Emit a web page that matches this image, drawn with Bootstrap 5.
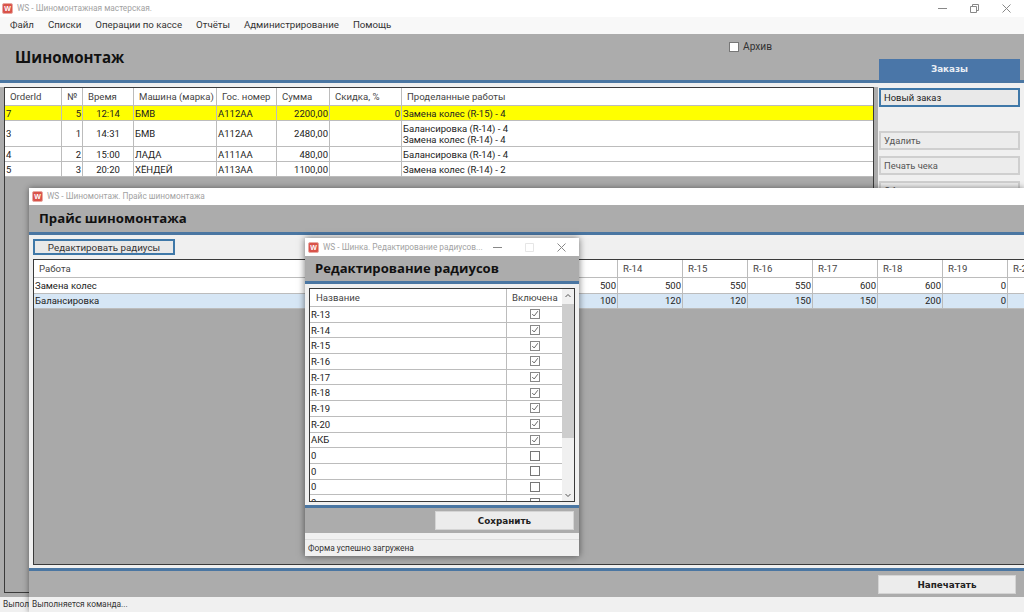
<!DOCTYPE html>
<html lang="ru">
<head>
    <meta charset="UTF-8">
    <meta name="viewport" content="width=device-width, initial-scale=1.0">
    <title>Шиномонтаж</title>
    <link href="https://cdn.jsdelivr.net/npm/bootstrap@5.3.0/dist/css/bootstrap.min.css" rel="stylesheet" />
    <style>
        html, body { height: 612px; overflow: hidden; }
        body { font-family: Roboto, sans-serif; font-size: 9.5px; color: #222; background: #aaa; position: relative; }

        .win { background: #f0f0f0; display: flex; flex-direction: column; }
        .win-main { height: 612px; }
        .win-price { position: absolute; left: 29px; top: 188px; right: 0; height: 424px; box-shadow: 0 0 6px rgba(0,0,0,.45); }
        .win-dialog { position: absolute; left: 305px; top: 238px; width: 274px; height: 318px; box-shadow: 0 0 7px rgba(0,0,0,.55); }

        .titlebar { height: 17px; background: #fff; color: #a2a2a2; font-size: 8.3px; flex: none; }
        .win-dialog .titlebar { height: 18px; }
        .app-icon { width: 11px; height: 11px; margin: 0 4px 0 2px; background: #d9534a; border: 1px solid #e9a9a2; border-radius: 2px; color: #fff; font: bold 7px/9px "Liberation Sans", sans-serif; text-align: center; flex: none; }
        .win-price .app-icon, .win-dialog .app-icon { margin-left: 3px; }
        .ctl { color: #888; margin-right: 23px; flex: none; }
        .ctl:last-child { margin-right: 13px; }
        .ctl-off { opacity: .2; }

        .menubar { height: 17px; background: #f8f8f8; font-size: 9.7px; color: #333; padding-left: 10px; gap: 14px; flex: none; }

        .head { background: #acacac; border-bottom: 3px solid #4a76a2; flex: none; }
        .head h1 { font-family: "Open Sans", sans-serif; font-weight: 700; color: #111; margin: 0; }
        .head-main { height: 49px; }
        .head-main h1 { width: 729px; padding: 14px 0 0 15px; font-size: 15.1px; }
        .archive { width: 150px; padding-top: 5px; font-size: 10.2px; color: #333; gap: 4px; height: 20px; }
        .tab { width: 141px; height: 22px; background: #4a76a8; color: #e8eef5; font-family: "DejaVu Sans", sans-serif; font-weight: 700; font-size: 8.8px; margin-top: 25px; }
        .head-price { height: 30px; padding: 6px 0 0 10px; }
        .head-price h1 { font-size: 13.2px; }
        .head-dialog { height: 28px; padding: 5px 0 0 10px; }
        .head-dialog h1 { font-size: 13.1px; }

        .form-check-input { width: 10px; height: 10px; margin: 0; border: 1px solid #777; border-radius: 0 !important; background-color: #fff; flex: none; }
        .form-check-input:checked[type=checkbox] { background-color: #fff; border-color: #888; --bs-form-check-bg-image: url("data:image/svg+xml,%3csvg xmlns='http://www.w3.org/2000/svg' viewBox='0 0 10 10'%3e%3cpath fill='none' stroke='%23666' stroke-width='1.2' d='M1.500 5l2.500 2.500 4.500-6'/%3e%3c/svg%3e"); }

        .main-body { height: 514px; min-height: 0; flex: none; }
        .main-left { width: 878px; background: #acacac; padding: 0 4px 5px 4px; }
        .band { height: 4px; background: #f0f0f0; margin: 0 -4px; }
        .frame { border: 1px solid #3a3a3a; background: #a9a9a9; overflow: hidden; }
        .main-left .frame { height: 506px; }
        .main-right { width: 146px; padding: 5px 4px 0 1px; }

        .side-btn { display: block; width: 141px; height: 19px; padding: 0 0 0 3px; background: #ececec; border: 2px solid #cfcfcf; border-radius: 0; color: #555; font-size: 9.4px; text-align: left; line-height: 14px; --bs-btn-hover-bg: #ececec; }
        .side-btn.active-btn { border-color: #3f78a8; background: #e9e9e9; color: #222; margin-bottom: 24px; }
        .side-btn + .side-btn { margin-top: 6px; }
        .side-btn.active-btn + .side-btn { margin-top: 0; }

        .grid { table-layout: fixed; margin: 0; border-collapse: separate; border-spacing: 0; font-size: 9.5px; }
        .grid th, .grid td { padding: 0 1px 0 1px; border: 0; border-right: 1px solid #bcbcbc; border-bottom: 1px solid #bcbcbc; background: #fff; color: #222; font-weight: 400; white-space: nowrap; overflow: hidden; line-height: 11px; vertical-align: middle; }
        .grid th { font-size: 9.6px; color: #444; padding-left: 5px; }
        .grid .num { text-align: right; }
        .grid tr.row-yellow td { background: #ffff00; }
        .grid tr.row-blue td { background: #d6e6f5; }

        .orders { width: 870px; }
        .orders th { height: 18px; }
        .orders td { height: 15px; }
        .orders tr.tall td { height: 26px; }
        .orders th:nth-child(1) { width: 57px; }
        .orders th:nth-child(2) { width: 21px; }
        .orders th:nth-child(3) { width: 51px; }
        .orders th:nth-child(4) { width: 83px; }
        .orders th:nth-child(5) { width: 60px; }
        .orders th:nth-child(6) { width: 53px; }
        .orders th:nth-child(7) { width: 72px; }
        .orders .time { text-align: center; }

        .price-body { height: 336px; padding: 4px 0 0 4px; background: #f0f0f0; border-bottom: 3px solid #4a76a2; flex: none; }
        .price-body .btn-edit { display: block; width: 142px; height: 16px; padding: 0; border: 2px solid #3f78a8; border-radius: 0; background: #e9e9e9; color: #333; font-size: 9.8px; line-height: 11px; margin-bottom: 4px; }
        .price-body .frame { height: 306px; border-right: 0; }
        .prices { width: 1039px; }
        .prices th { height: 18px; }
        .prices td { height: 15.500px; }
        .prices th:nth-child(1) { width: 519px; }
        .prices th:nth-child(n+2) { width: 65px; }

        .foot { background: #acacac; flex: none; }
        .foot-price { height: 26px; padding: 4px 8px 0 0; }
        .foot-price .save-btn { width: 138px; }
        .foot-dialog { height: 25px; padding: 3px 5px 0 0; }
        .save-btn { height: 19px; padding: 0; width: 139px; background: #ececec; border: 1px solid #d4d4d4; border-radius: 0; color: #222; font-family: "DejaVu Sans", sans-serif; font-weight: 700; font-size: 8.8px; line-height: 16px; }

        .status { background: #f0f0f0; font-size: 8.4px; color: #333; flex: none; padding-left: 3px; }
        .status-main { height: 15px; line-height: 15px; }
        .dialog-body { height: 224px; padding: 4px 4px 3px 4px; border-bottom: 3px solid #4a76a2; flex: none; }
        .dialog-body .frame { height: 214px; border-width: 1.500px; }
        .radii { width: 254px; }
        .radii th { height: 18px; padding-left: 6px; }
        .radii td { height: 15.700px; }
        .radii th:nth-child(2) { width: 57px; padding-left: 5px; }
        .radii td:nth-child(2) { text-align: center; }
        .radii .form-check-input { display: block; margin: 0 auto; }
        .scroll { width: 12px; background: #f0f0f0; flex: none; position: relative; }
        .scroll-thumb { height: 134px; margin-top: 15px; background: #cdcdcd; }
        .scroll-up, .scroll-down { position: absolute; left: 3px; color: #555; }
        .scroll-up { top: 4px; }
        .scroll-down { bottom: 3px; }
        .dialog-gap { height: 7px; background: #f0f0f0; border-bottom: 1px solid #dcdcdc; flex: none; }
        .status-dialog { flex: 1; line-height: 16px; }
    </style>
</head>
<body>
    <!-- главное окно -->
    <div class="win win-main">
        <div class="titlebar d-flex align-items-center">
            <span class="app-icon">W</span>
            <span class="flex-fill">WS - Шиномонтажная мастерская.</span>
            <svg class="ctl" width="9" height="9" viewBox="0 0 9 9"><path d="M0 4.500h9" stroke="currentColor" fill="none"/></svg>
            <svg class="ctl" width="9" height="9" viewBox="0 0 9 9"><path d="M.5 2.500h6v6h-6zM2.500 2.500v-2h6v6h-2" stroke="currentColor" fill="none"/></svg>
            <svg class="ctl" width="9" height="9" viewBox="0 0 9 9"><path d="M.5.500l8 8M8.500.500l-8 8" stroke="currentColor" fill="none"/></svg>
        </div>
        <div class="menubar d-flex align-items-center">
            <span>Файл</span><span>Списки</span><span>Операции по кассе</span><span>Отчёты</span><span>Администрирование</span><span>Помощь</span>
        </div>
        <div class="head head-main d-flex">
            <h1>Шиномонтаж</h1>
            <label class="archive d-flex align-items-center"><input class="form-check-input" type="checkbox">Архив</label>
            <div class="tab d-flex align-items-center justify-content-center">Заказы</div>
        </div>
        <div class="main-body d-flex">
            <div class="main-left">
                <div class="band"></div>
                <div class="frame">
                    <table class="table grid orders">
                        <thead>
                            <tr><th>OrderId</th><th>№</th><th>Время</th><th>Машина (марка)</th><th>Гос. номер</th><th>Сумма</th><th>Скидка, %</th><th>Проделанные работы</th></tr>
                        </thead>
                        <tbody>
                            <tr class="row-yellow"><td>7</td><td class="num">5</td><td class="time">12:14</td><td>БМВ</td><td>А112АА</td><td class="num">2200,00</td><td class="num">0</td><td>Замена колес (R-15) - 4</td></tr>
                            <tr class="tall"><td>3</td><td class="num">1</td><td class="time">14:31</td><td>БМВ</td><td>А112АА</td><td class="num">2480,00</td><td></td><td>Балансировка (R-14) - 4<br>Замена колес (R-14) - 4</td></tr>
                            <tr><td>4</td><td class="num">2</td><td class="time">15:00</td><td>ЛАДА</td><td>А111АА</td><td class="num">480,00</td><td></td><td>Балансировка (R-14) - 4</td></tr>
                            <tr><td>5</td><td class="num">3</td><td class="time">20:20</td><td>ХЁНДЕЙ</td><td>А113АА</td><td class="num">1100,00</td><td></td><td>Замена колес (R-14) - 2</td></tr>
                        </tbody>
                    </table>
                </div>
            </div>
            <div class="main-right">
                <button class="btn side-btn active-btn" type="button">Новый заказ</button>
                <button class="btn side-btn" type="button">Удалить</button>
                <button class="btn side-btn" type="button">Печать чека</button>
                <button class="btn side-btn" type="button">Обновить</button>
            </div>
        </div>
        <div class="status status-main">Выполняется команда...</div>
    </div>

    <!-- окно прайса -->
    <div class="win win-price">
        <div class="titlebar d-flex align-items-center">
            <span class="app-icon">W</span>
            <span>WS - Шиномонтаж. Прайс шиномонтажа</span>
        </div>
        <div class="head head-price"><h1>Прайс шиномонтажа</h1></div>
        <div class="price-body">
            <button class="btn btn-edit" type="button">Редактировать радиусы</button>
            <div class="frame">
                <table class="table grid prices">
                    <thead>
                        <tr><th>Работа</th><th>R-13</th><th>R-14</th><th>R-15</th><th>R-16</th><th>R-17</th><th>R-18</th><th>R-19</th><th>R-20</th></tr>
                    </thead>
                    <tbody>
                        <tr><td>Замена колес</td><td class="num">500</td><td class="num">500</td><td class="num">550</td><td class="num">550</td><td class="num">600</td><td class="num">600</td><td class="num">0</td><td></td></tr>
                        <tr class="row-blue"><td>Балансировка</td><td class="num">100</td><td class="num">120</td><td class="num">120</td><td class="num">150</td><td class="num">150</td><td class="num">200</td><td class="num">0</td><td></td></tr>
                    </tbody>
                </table>
            </div>
        </div>
        <div class="foot foot-price d-flex justify-content-end">
            <button class="btn save-btn" type="button">Напечатать</button>
        </div>
        <div class="status flex-fill d-flex align-items-center">Выполняется команда...</div>
    </div>

    <!-- диалог радиусов -->
    <div class="win win-dialog">
        <div class="titlebar d-flex align-items-center">
            <span class="app-icon">W</span>
            <span class="flex-fill">WS - Шинка. Редактирование радиусов...</span>
            <svg class="ctl" width="9" height="9" viewBox="0 0 9 9"><path d="M0 4.500h9" stroke="currentColor" fill="none"/></svg>
            <svg class="ctl ctl-off" width="9" height="9" viewBox="0 0 9 9"><path d="M.5.500h8v8h-8z" stroke="currentColor" fill="none"/></svg>
            <svg class="ctl" width="9" height="9" viewBox="0 0 9 9"><path d="M.5.500l8 8M8.500.500l-8 8" stroke="currentColor" fill="none"/></svg>
        </div>
        <div class="head head-dialog"><h1>Редактирование радиусов</h1></div>
        <div class="dialog-body">
            <div class="frame d-flex">
                <div class="flex-fill overflow-hidden">
                    <table class="table grid radii">
                        <thead><tr><th>Название</th><th>Включена</th></tr></thead>
                        <tbody>
                            <tr><td>R-13</td><td><input class="form-check-input" type="checkbox" checked></td></tr>
                            <tr><td>R-14</td><td><input class="form-check-input" type="checkbox" checked></td></tr>
                            <tr><td>R-15</td><td><input class="form-check-input" type="checkbox" checked></td></tr>
                            <tr><td>R-16</td><td><input class="form-check-input" type="checkbox" checked></td></tr>
                            <tr><td>R-17</td><td><input class="form-check-input" type="checkbox" checked></td></tr>
                            <tr><td>R-18</td><td><input class="form-check-input" type="checkbox" checked></td></tr>
                            <tr><td>R-19</td><td><input class="form-check-input" type="checkbox" checked></td></tr>
                            <tr><td>R-20</td><td><input class="form-check-input" type="checkbox" checked></td></tr>
                            <tr><td>АКБ</td><td><input class="form-check-input" type="checkbox" checked></td></tr>
                            <tr><td>0</td><td><input class="form-check-input" type="checkbox"></td></tr>
                            <tr><td>0</td><td><input class="form-check-input" type="checkbox"></td></tr>
                            <tr><td>0</td><td><input class="form-check-input" type="checkbox"></td></tr>
                            <tr><td>0</td><td><input class="form-check-input" type="checkbox"></td></tr>
                        </tbody>
                    </table>
                </div>
                <div class="scroll">
                    <svg class="scroll-up" width="6" height="5" viewBox="0 0 6 5"><path d="M.5 4L3 1.500 5.500 4" stroke="currentColor" fill="none"/></svg>
                    <div class="scroll-thumb"></div>
                    <svg class="scroll-down" width="6" height="5" viewBox="0 0 6 5"><path d="M.5 1L3 3.500 5.500 1" stroke="currentColor" fill="none"/></svg>
                </div>
            </div>
        </div>
        <div class="foot foot-dialog d-flex justify-content-end">
            <button class="btn save-btn" type="button">Сохранить</button>
        </div>
        <div class="dialog-gap"></div>
        <div class="status status-dialog">Форма успешно загружена</div>
    </div>

    <script src="https://cdn.jsdelivr.net/npm/bootstrap@5.3.0/dist/js/bootstrap.bundle.min.js"></script>
</body>
</html>
